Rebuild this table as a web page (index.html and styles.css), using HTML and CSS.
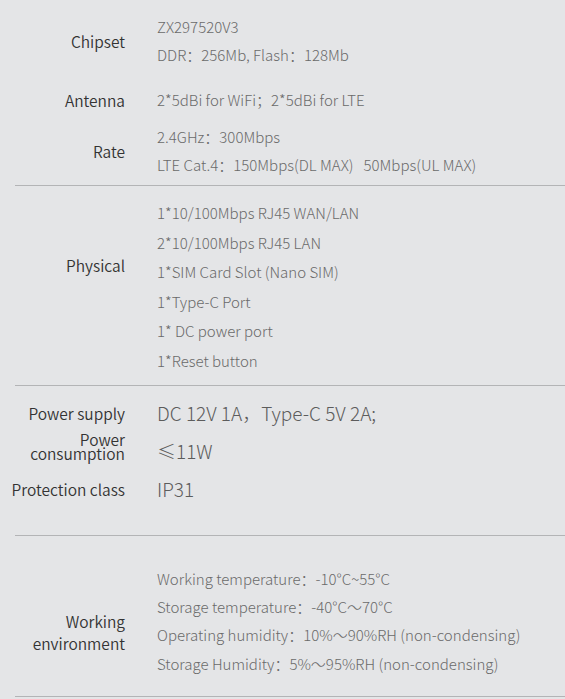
FILE: index.html
```html
<!DOCTYPE html>
<html>
<head>
<meta charset="utf-8">
<link rel="stylesheet" href="styles.css">
</head>
<body>
<div class="page">
  <section class="sec sec-1">
    <div class="row row-chipset">
      <div class="label">Chipset</div>
      <div class="vals">
        <div>ZX297520V3</div>
        <div>DDR：256Mb, Flash：128Mb</div>
      </div>
    </div>
    <div class="row row-antenna">
      <div class="label">Antenna</div>
      <div class="vals"><div>2*5dBi for WiFi；2*5dBi for LTE</div></div>
    </div>
    <div class="row row-rate">
      <div class="label">Rate</div>
      <div class="vals">
        <div>2.4GHz：300Mbps</div>
        <div>LTE Cat.4：150Mbps(DL MAX)&nbsp;&nbsp;&nbsp;50Mbps(UL MAX)</div>
      </div>
    </div>
  </section>
  <div class="divider"></div>
  <section class="sec sec-2">
    <div class="row row-physical">
      <div class="label label-physical">Physical</div>
      <div class="vals vals-physical">
        <div>1*10/100Mbps RJ45 WAN/LAN</div>
        <div>2*10/100Mbps RJ45 LAN</div>
        <div>1*SIM Card Slot (Nano SIM)</div>
        <div>1*Type-C Port</div>
        <div>1* DC power port</div>
        <div>1*Reset button</div>
      </div>
    </div>
  </section>
  <div class="divider"></div>
  <section class="sec sec-3">
    <div class="row row-power">
      <div class="label">Power supply</div>
      <div class="vals vals-big"><div>DC 12V 1A，Type-C 5V 2A;</div></div>
    </div>
    <div class="row row-consumption">
      <div class="label label-two">Power<br>consumption</div>
      <div class="vals vals-big vals-cons"><div>≤11W</div></div>
    </div>
    <div class="row row-protect">
      <div class="label">Protection class</div>
      <div class="vals vals-big"><div>IP31</div></div>
    </div>
  </section>
  <div class="divider"></div>
  <section class="sec sec-4">
    <div class="row row-env">
      <div class="label label-env">Working<br>environment</div>
      <div class="vals vals-env">
        <div>Working temperature：-10°C~55°C</div>
        <div>Storage temperature：-40°C～70°C</div>
        <div>Operating humidity：10%～90%RH (non-condensing)</div>
        <div>Storage Humidity：5%～95%RH (non-condensing)</div>
      </div>
    </div>
  </section>
  <div class="divider"></div>
</div>
</body>
</html>
```

FILE: styles.css
```css
html, body {
  margin: 0;
  padding: 0;
  background: #e4e5e7;
}
body {
  font-family: "Noto Sans CJK SC", "Noto Sans", sans-serif;
  width: 565px;
  height: 699px;
  overflow: hidden;
}
.page {
  display: flex;
  flex-direction: column;
}
.divider {
  height: 1px;
  margin-left: 15px;
  background: #b3b4b6;
}
.row {
  display: grid;
  grid-template-columns: 125px 1fr;
  column-gap: 32px;
  align-items: center;
}
.label {
  text-align: right;
  font-size: 15.5px;
  line-height: 20px;
  color: #333333;
  font-weight: 350;
  white-space: nowrap;
}
.vals {
  font-size: 15px;
  line-height: 28px;
  color: #6a6a6a;
  font-weight: 300;
  white-space: nowrap;
}
.sec-1 { padding: 13px 0 6px; }
.row-antenna { margin-top: 17px; }
.row-rate { margin-top: 9px; }

.sec-2 { padding: 12px 0 9px; }
.row-physical { align-items: start; }
.vals-physical { line-height: 29.6px; }
.label-physical { margin-top: 57px; }

.sec-3 { padding: 13px 0 32px; }
.vals-big {
  font-size: 19px;
  color: #5c5c5c;
}
.row-consumption {
  margin-top: 5px;
  align-items: start;
}
.label-two {
  line-height: 14px;
}
.vals-cons { margin-top: 5px; }
.row-protect { margin-top: 10px; }

.sec-4 { padding: 29px 0 18px; }
.row-env { align-items: start; }
.vals-env { line-height: 28.4px; }
.label-env {
  line-height: 22px;
  margin-top: 45px;
}
```
